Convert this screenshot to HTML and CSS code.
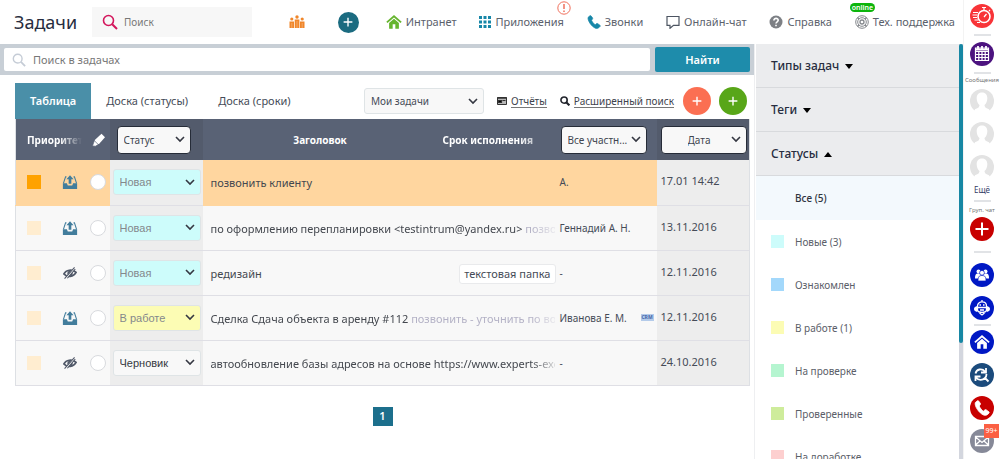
FILE: index.html
```html
<!DOCTYPE html>
<html lang="ru">
<head>
<meta charset="utf-8">
<title>Задачи</title>
<link rel="stylesheet" href="styles.css">
</head>
<body>
<svg class="defs" aria-hidden="true">
  <symbol id="lens" viewBox="0 0 16 16"><circle cx="6.5" cy="6.5" r="5" fill="none" stroke="currentColor" stroke-width="1.6"/><path d="M10.2 10.2 15 15" stroke="currentColor" stroke-width="2"/></symbol>
  <symbol id="plus" viewBox="0 0 16 16"><path d="M8 1v14M1 8h14" stroke="currentColor" stroke-width="2.2"/></symbol>
  <symbol id="phone" viewBox="0 0 16 16"><path fill="currentColor" d="M3.4.8 1.3 2.6C.2 6 5.200 13.300 9.500 15c2 .7 4 .3 5.700-2.300l-.2-.8-3-2.200-1 .1-1.600 1.400C8 10.500 6 8 5.200 6l1.200-1.600.1-.9L4.400.8z" stroke="currentColor" stroke-width=".8"/></symbol>
  <symbol id="house" viewBox="0 0 18 16"><path d="M1 8.500 9 1.500l8 7" fill="none" stroke="currentColor" stroke-width="2"/><path fill="currentColor" d="M3.500 9 9 4.300 14.500 9v6.500h-4V10.500h-3v5h-4z"/></symbol>
  <symbol id="tray" viewBox="0 0 18 16"><path fill="currentColor" d="M9 .3 13 5h-2.500v5h-3V5H5zM1 9.500h4.500l1 2.300h5l1-2.300H17V16H1z"/><path d="M5 2.200H4L1.600 9.500M13 2.200h1l2.400 7.300" fill="none" stroke="currentColor" stroke-width="1.200"/></symbol>
  <symbol id="hidden" viewBox="0 0 16 14"><path d="M1 8C3.500 3.500 10 2 15 6.200 12 11.500 5 12.500 1 8z" fill="none" stroke="currentColor" stroke-width="1.900"/><circle cx="8" cy="7.300" r="3" fill="currentColor"/><path d="M3 13.500 14 .5" stroke="#f8f8f8" stroke-width="2.200"/><path d="M1.800 13.500 13.200.5M5 13 14 2.500" stroke="currentColor" stroke-width="1.200"/></symbol>
  <symbol id="avatar" viewBox="0 0 24 24"><circle cx="12" cy="12" r="12" fill="#e3e3e3"/><path fill="#fff" d="M12 3.500c-4 0-5.500 2.800-5.300 6.200.1 3 1.300 5.200 2.800 6.300-.2 2-1 3-4.500 4.300L3 25h18l-2-4.700c-3.500-1.300-4.300-2.300-4.500-4.300 1.500-1.100 2.700-3.300 2.800-6.300.2-3.400-1.300-6.200-5.300-6.200z"/></symbol>
</svg>
<div class="app">
  <div class="workspace">
    <header class="topbar">
      <h1 class="topbar-title">Задачи</h1>
      <label class="quick-search">
        <svg class="icon-16"><use href="#lens"/></svg>
        <input type="search" placeholder="Поиск" aria-label="Поиск">
      </label>
      <nav class="topnav">
        <a href="#" class="rating" aria-label="Рейтинг"><svg class="icon-16" viewBox="0 0 16 16" fill="currentColor"><path d="M.5 7.500h4.500V14H.5zM5.700 5.500h4.700V14H5.700zM11 7.500h4.500V14H11z"/><circle cx="2.800" cy="5" r="1.600"/><circle cx="8" cy="3" r="1.700"/><circle cx="13.200" cy="5" r="1.600"/><path d="M2.800 9v5M8 7v7M13.200 9v5" stroke="#fff" stroke-width=".7" opacity=".4"/></svg></a>
        <button class="create" aria-label="Создать"><svg class="icon-10" viewBox="0 0 16 16"><use href="#plus"/></svg></button>
        <a href="#"><svg class="icon-16 green"><use href="#house"/></svg>Интранет</a>
        <a href="#" class="apps"><svg class="icon-12 teal" viewBox="0 0 12 12" fill="currentColor"><path d="M0 0h3v3H0zM4.500 0h3v3h-3zM9 0h3v3H9zM0 4.500h3v3H0zM4.500 4.500h3v3h-3zM9 4.500h3v3H9zM0 9h3v3H0zM4.500 9h3v3h-3zM9 9h3v3H9z"/></svg>Приложения<svg class="alert" viewBox="0 0 14 14"><circle cx="7" cy="7" r="6.200" fill="#fff" stroke="#f0705c"/><path d="M7 3v5M7 9.500V11" stroke="#f0705c" stroke-width="1.500"/></svg></a>
        <a href="#"><svg class="icon-14 teal"><use href="#phone"/></svg>Звонки</a>
        <a href="#"><svg class="icon-14" viewBox="0 0 14 14" fill="none" stroke="#4d5562" stroke-width="1.200"><path d="M1 1.500h12v8.800H7.500L4 13.300v-3H1z"/></svg>Онлайн-чат</a>
        <a href="#"><svg class="icon-14" viewBox="0 0 14 14"><circle cx="7" cy="7" r="6.500" fill="#7d8085"/><path d="M4.900 5.500c0-3 4.400-2.700 4.300-.2C9.200 6.800 7 6.800 7 8.600M7 9.700v1.600" fill="none" stroke="#fff" stroke-width="1.600"/></svg>Справка</a>
        <a href="#" class="support"><svg class="icon-14" viewBox="0 0 14 14" fill="none" stroke="#85888d"><circle cx="7" cy="7" r="6.300"/><circle cx="7" cy="7" r="4.300"/><circle cx="7" cy="7" r="2" stroke-width="1.300"/><path d="M2.500 2.500 4 4M11.500 2.500 10 4M2.500 11.500 4 10M11.500 11.500 10 10" stroke-width="1.300"/></svg>Тех. поддержка<span class="online">online</span></a>
      </nav>
    </header>
    <div class="columns">
      <main class="main">
        <form class="task-search">
          <label class="task-search-field">
            <svg class="icon-14"><use href="#lens"/></svg>
            <input type="search" placeholder="Поиск в задачах" aria-label="Поиск в задачах">
          </label>
          <button type="button">Найти</button>
        </form>
        <section class="content">
          <div class="toolbar">
            <div class="tabs">
              <button class="tab active">Таблица</button>
              <button class="tab">Доска (статусы)</button>
              <button class="tab">Доска (сроки)</button>
            </div>
            <select class="scope" aria-label="Набор задач"><option>Мои задачи</option></select>
            <a href="#" class="tool"><svg class="icon-10" viewBox="0 0 10 10"><path d="M.5 1.500h9v7h-9z" fill="#b8b8b8" stroke="#333"/><path d="M0 2.200h10M1.500 4.500h3v2h-3zM5.500 4.500h3" stroke="#333" stroke-width="1.200"/></svg><span>Отчёты</span></a>
            <a href="#" class="tool advanced"><svg class="icon-10" viewBox="0 0 16 16"><circle cx="6.500" cy="6.500" r="5" fill="none" stroke="currentColor" stroke-width="2.600"/><path d="m10 10 5 5" stroke="currentColor" stroke-width="3.300"/></svg><span>Расширенный поиск</span></a>
            <div class="adders">
              <button class="add coral" aria-label="Добавить"><svg class="icon-10" viewBox="0 0 16 16"><use href="#plus"/></svg></button>
              <button class="add lime" aria-label="Добавить задачу"><svg class="icon-10" viewBox="0 0 16 16"><use href="#plus"/></svg></button>
            </div>
          </div>
          <table class="tasks">
            <colgroup><col class="c-priority"><col class="c-icon"><col class="c-check"><col class="c-status"><col><col class="c-due"><col class="c-people"><col class="c-date"></colgroup>
            <thead>
              <tr>
                <th colspan="2" class="fade-head"><span>Приоритет</span></th>
                <th><svg class="icon-14 marker" viewBox="0 0 14 14"><path fill="#fff" d="M9.500.8 13 4.300 7 11l-4-.2L2.800 7z"/><path d="m2.300 7.600 4 4L3.500 13.200.5 13z" fill="#fff" stroke="#596275" stroke-width=".7"/></svg></th>
                <th class="shade"><select class="head-select narrow" aria-label="Статус"><option>Статус</option></select></th>
                <th class="center">Заголовок</th>
                <th class="fade-head due"><span>Срок исполнения</span></th>
                <th><select class="head-select" aria-label="Участники"><option>Все участн...</option></select></th>
                <th class="shade"><select class="head-select date-select" aria-label="Дата"><option>Дата</option></select></th>
              </tr>
            </thead>
            <tbody>
              <tr class="urgent">
                <td class="prio"><i class="square"></i></td>
                <td><svg class="icon-16 sent"><use href="#tray"/></svg></td>
                <td><input type="checkbox" aria-label="Выбрать"></td>
                <td class="shade"><select class="status new" aria-label="Статус задачи"><option>Новая</option></select></td>
                <td colspan="2" class="title"><div>позвонить клиенту</div></td>
                <td class="people">А.</td>
                <td class="shade date">17.01 14:42</td>
              </tr>
              <tr>
                <td class="prio"><i class="square"></i></td>
                <td><svg class="icon-16 sent"><use href="#tray"/></svg></td>
                <td><input type="checkbox" aria-label="Выбрать"></td>
                <td class="shade"><select class="status new" aria-label="Статус задачи"><option>Новая</option></select></td>
                <td colspan="2" class="title faded"><div>по оформлению перепланировки &lt;testintrum@yandex.ru&gt; <span class="note">позвони</span></div></td>
                <td class="people">Геннадий А. Н.</td>
                <td class="shade date">13.11.2016</td>
              </tr>
              <tr>
                <td class="prio"><i class="square"></i></td>
                <td><svg class="icon-14 hid"><use href="#hidden"/></svg></td>
                <td><input type="checkbox" aria-label="Выбрать"></td>
                <td class="shade"><select class="status new" aria-label="Статус задачи"><option>Новая</option></select></td>
                <td colspan="2" class="title"><div class="with-tag">редизайн <span class="tag">текстовая папка</span></div></td>
                <td class="people">-</td>
                <td class="shade date">12.11.2016</td>
              </tr>
              <tr>
                <td class="prio"><i class="square"></i></td>
                <td><svg class="icon-16 sent"><use href="#tray"/></svg></td>
                <td><input type="checkbox" aria-label="Выбрать"></td>
                <td class="shade"><select class="status work" aria-label="Статус задачи"><option>В работе</option></select></td>
                <td colspan="2" class="title faded"><div>Сделка Сдача объекта в аренду #112 <span class="note">позвонить - уточнить по вопр</span></div></td>
                <td class="people"><div class="person">Иванова Е. М.<span class="crm">CRM</span></div></td>
                <td class="shade date">12.11.2016</td>
              </tr>
              <tr>
                <td class="prio"><i class="square"></i></td>
                <td><svg class="icon-14 hid"><use href="#hidden"/></svg></td>
                <td><input type="checkbox" aria-label="Выбрать"></td>
                <td class="shade"><select class="status draft" aria-label="Статус задачи"><option>Черновик</option></select></td>
                <td colspan="2" class="title faded"><div>автообновление базы адресов на основе https://www.experts-excha</div></td>
                <td class="people">-</td>
                <td class="shade date">24.10.2016</td>
              </tr>
            </tbody>
          </table>
          <nav class="pager"><button>1</button></nav>
        </section>
      </main>
      <aside class="filters">
        <div class="filters-body">
          <button class="group">Типы задач <i class="caret"></i></button>
          <button class="group">Теги <i class="caret"></i></button>
          <button class="group">Статусы <i class="caret up"></i></button>
          <ul>
            <li><a href="#" class="all"><i></i>Все (5)</a></li>
            <li><a href="#"><i class="s-new"></i>Новые (3)</a></li>
            <li><a href="#"><i class="s-seen"></i>Ознакомлен</a></li>
            <li><a href="#"><i class="s-work"></i>В работе (1)</a></li>
            <li><a href="#"><i class="s-review"></i>На проверке</a></li>
            <li><a href="#"><i class="s-checked"></i>Проверенные</a></li>
            <li><a href="#"><i class="s-rework"></i>На доработке</a></li>
          </ul>
        </div>
        <div class="scroll"><div class="thumb"></div></div>
      </aside>
    </div>
  </div>
  <aside class="rail">
    <button class="disc timer" aria-label="Таймер"><svg viewBox="0 0 24 24" fill="none" stroke="#fff"><circle cx="14" cy="12.500" r="6" stroke-width="1.600"/><path d="M14 6V4M12 3.500h4M14 13l2.500-3M19 7l1-1M3 8.500h5M2.500 11h4.500M3 13.500h4M4.500 16h4M7 18.500h3" stroke-width="1.200"/></svg></button>
    <hr>
    <button class="disc calendar" aria-label="Календарь"><svg viewBox="0 0 24 24" fill="none" stroke="#fff"><path d="M5.500 6h13v12.500h-13zM5.500 9.500h13M5.500 12.500h13M5.500 15.500h13M8.800 9.500v9M12 9.500v9M15.200 9.500v9" stroke-width="1.200"/><path d="M5 7.500h14M8 4v3M12 4v3M16 4v3" stroke-width="1.800"/></svg></button>
    <hr>
    <span class="caption">Сообщения</span>
    <div class="stack">
      <button class="disc" aria-label="Контакт 1"><svg viewBox="0 0 24 24"><use href="#avatar"/></svg></button>
      <button class="disc" aria-label="Контакт 2"><svg viewBox="0 0 24 24"><use href="#avatar"/></svg></button>
      <button class="disc" aria-label="Контакт 3"><svg viewBox="0 0 24 24"><use href="#avatar"/></svg></button>
    </div>
    <a href="#" class="more">Ещё</a>
    <hr class="tight">
    <span class="caption">Груп. чат</span>
    <button class="disc red" aria-label="Новый чат"><svg viewBox="0 0 24 24"><path d="M12 5.500v13M5.500 12h13" stroke="#fff" stroke-width="2"/></svg></button>
    <hr class="wide">
    <div class="stack">
      <button class="disc blue" aria-label="Сотрудники"><svg viewBox="0 0 24 24" fill="#fff"><circle cx="8.500" cy="8.500" r="2"/><circle cx="15.500" cy="8.500" r="2"/><path d="M5 15.500c0-4 1-5 3-5h8c2 0 3 1 3 5z"/><g stroke="#0018c4" stroke-width=".7"><circle cx="12" cy="9.800" r="2.400"/><path d="M8 18c0-4 1-5.500 4-5.500s4 1.500 4 5.500z"/></g></svg></button>
      <button class="disc blue" aria-label="Бот"><svg viewBox="0 0 24 24" fill="none" stroke="#fff" stroke-width="1.300"><path d="M7.500 10c0-5.500 9-5.500 9 0v4.500c-1 2.500-8 2.500-9 0zM7.500 11.500h9M9.500 17 12 19l2.500-2M12 4v2"/><path d="M6.500 11c-2.500.5-2.500 3.500 0 4zM17.500 11c2.500.5 2.500 3.500 0 4z" fill="#fff"/><path d="M9.500 9h1.500M13 9h1.500M10 14h4" stroke-width="1.600"/></svg></button>
    </div>
    <hr class="tight">
    <div class="stack">
      <button class="disc blue" aria-label="Главная"><svg class="inner" viewBox="0 0 18 16"><use href="#house"/></svg></button>
      <button class="disc navy" aria-label="Поиск и замена"><svg viewBox="0 0 24 24" fill="none" stroke="#fff" stroke-width="1.800"><path d="M5.500 10.500C6.500 6 12 5 15 8.500M16 5v4.500h-5M5.500 18v-4.500h5M6 14.500c2.500 3 6.500 3 9 .5 1.500-1.500 1.500-3 1.500-4M14.500 14.500l4 4"/></svg></button>
      <button class="disc red" aria-label="Телефон"><svg class="inner" viewBox="0 0 16 16"><use href="#phone"/></svg></button>
      <button class="disc mail" aria-label="Почта"><svg viewBox="0 0 24 24" fill="none" stroke="#fff" stroke-width="1.300"><path d="M5.500 7.500h13v9h-13zM5.500 8l6.500 5.500L18.500 8M5.500 16l4.500-4M18.500 16 14 12"/></svg><span class="count">99+</span></button>
    </div>
  </aside>
</div>
</body>
</html>
```

FILE: styles.css
```css
* { box-sizing: border-box; }
body {
  margin: 0;
  font: 11px/16px "Noto Sans", "Open Sans", sans-serif;
  color: #454b57;
  background: #fff;
}
button, input, select { font: inherit; color: inherit; margin: 0; border: 0; }
button { padding: 0; cursor: pointer; }
a { color: inherit; text-decoration: none; }
svg { display: block; flex: none; }
.defs { position: absolute; width: 0; height: 0; }
.icon-10 { width: 10px; height: 10px; }
.icon-12 { width: 12px; height: 12px; }
.icon-14 { width: 14px; height: 14px; }
.icon-16 { width: 16px; height: 16px; }
.green { color: #66b52e; }
.teal { color: #1787a8; }

.app { display: flex; height: 100vh; overflow: hidden; }
.workspace { flex: 1; min-width: 0; display: flex; flex-direction: column; }

/* Top bar */
.topbar { display: flex; align-items: center; flex: none; height: 44px; padding: 0 8px 0 14px; }
.topbar-title { margin: 0; width: 78px; font-size: 18px; line-height: 24px; font-weight: 400; color: #272d40; }
.quick-search { display: flex; align-items: center; gap: 6px; width: 160px; height: 30px; padding: 0 10px; background: #f7f7f7; color: #d3165c; }
.quick-search input { width: 100%; padding: 0; background: none; font-size: 10px; outline: 0; }
input::placeholder { color: #777; opacity: 1; }
.topnav { flex: 1; display: flex; align-items: center; justify-content: space-between; margin-left: 37px; color: #5b616c; }
.topnav a { position: relative; display: flex; align-items: center; gap: 4px; white-space: nowrap; }
.topnav .rating { margin-right: 10px; color: #f0862a; }
.create { display: grid; place-items: center; width: 21px; height: 21px; margin-right: 4px; border-radius: 50%; background: #1b6b80; color: #fff; }
.alert { position: absolute; width: 14px; height: 14px; right: -7px; top: -13px; }
.online { position: absolute; left: -5px; top: -11px; padding: 0 2px; border-radius: 5px; background: #0cb50c; color: #fff; font-size: 7px; line-height: 9px; font-weight: 600; }

/* Columns under the top bar */
.columns { flex: 1; display: flex; min-height: 0; }
.main { flex: 1; min-width: 0; border-right: 1px solid #eeeff1; }
.task-search { display: flex; gap: 5px; padding: 3px 4px; background: #c8cfd6; }
.task-search-field { flex: 1; display: flex; align-items: center; gap: 7px; height: 23px; margin: 1px 0; padding: 0 8px; background: #fff; border-radius: 2px; color: #c5ccd6; }
.task-search-field input { flex: 1; padding: 0; background: none; outline: 0; }
.task-search button { width: 95px; border-radius: 2px; background: #1e8cab; color: #fff; font-weight: 600; }

.content { padding: 8px 4px 0 15px; }
.toolbar { display: flex; align-items: center; padding-right: 3px; }
.tabs { display: flex; margin-right: auto; }
.tab { height: 36px; padding: 0 15px; background: none; white-space: nowrap; }
.tab.active { background: #4a8fa8; color: #fff; font-weight: 600; }
select {
  appearance: none;
  background: #f8f8f8 url("data:image/svg+xml,%3Csvg xmlns='http://www.w3.org/2000/svg' width='10' height='7'%3E%3Cpath d='M1 1l4 4 4-4' fill='none' stroke='%23353842' stroke-width='1.6'/%3E%3C/svg%3E") no-repeat right 5px center;
}
.scope { width: 120px; height: 26px; padding: 0 6px; border: 1px solid #dfe4e6; border-radius: 3px; font-size: 10px; }
.tool { display: flex; align-items: center; gap: 4px; margin-left: 13px; font-size: 10px; white-space: nowrap; color: #22252d; }
.tool span { border-bottom: 1px solid #777; line-height: 12px; color: #3e434d; }
.adders { display: flex; gap: 8px; margin-left: 9px; }
.add { display: grid; place-items: center; width: 28px; height: 28px; border-radius: 50%; color: #fff; }
.coral { background: #fb6f52; }
.lime { background: #58a618; }

/* Task table */
.tasks { width: 100%; table-layout: fixed; border-collapse: collapse; border: 1px solid #dde0e4; border-top: 0; }
.c-priority { width: 38px; }
.c-icon { width: 30px; }
.c-check { width: 26px; }
.c-status { width: 93px; }
.c-due { width: 120px; }
.c-people { width: 99px; }
.c-date { width: 93px; }
th { height: 41px; padding: 0; background: #596275; color: #fff; font-size: 10px; font-weight: 700; text-align: left; }
th.shade { background: #535b6c; }
.center { text-align: center; }
.fade-head { white-space: nowrap; overflow: hidden; padding-left: 11px; }
.fade-head span { display: block; overflow: hidden; margin-right: 2px; mask-image: linear-gradient(90deg, #000 60%, transparent); }
.due { padding-left: 5px; }
.due span { margin-right: 20px; mask-image: linear-gradient(90deg, #000 80%, #0008); }
.marker { margin-left: 8px; }
.head-select { display: block; width: 86px; height: 28px; margin-left: 3px; padding: 0 6px; border: 1px solid #262c38; border-radius: 4px; color: #40454f; font-weight: 400; }
.head-select.narrow { width: 74px; margin-left: 7px; }
.date-select { margin-left: 4px; padding-left: 26px; }
.tasks td { height: 45px; padding: 0; background: #f8f8f8; border-bottom: 1px solid #dfdfe5; }
.tasks td.shade { background: #ededed; }
.tasks .urgent td:not(.shade) { background: #ffd69f; border-bottom-color: #ffd69f; }
.tasks .prio { padding-left: 11px; }
.square { display: block; width: 14px; height: 14px; background: #ffedd0; }
.urgent .square { background: #ffa200; }
.sent { margin-left: 8px; color: #427d9c; }
.hid { margin-left: 9px; color: #505868; }
.tasks input { display: block; appearance: none; width: 16px; height: 16px; margin-left: 6px; border: 1px solid #d8dade; border-radius: 50%; background: #fff; }
.status { display: block; width: 88px; height: 26px; margin-left: 3px; padding: 0 6px; border: 1px solid #dfe4e6; border-radius: 3px; font-family: "Liberation Sans", sans-serif; }
.new { background-color: #cdfcfb; color: #84888c; }
.work { background-color: #fcfcb4; color: #84888c; }
.draft { color: #35393f; }
.title div { padding: 2px 0 0 8px; overflow: hidden; white-space: nowrap; color: #44484f; }
.faded div { margin-right: 3px; mask-image: linear-gradient(90deg, #000 93%, #0003); }
.note { color: #b4b2c6; }
.title .with-tag { display: flex; align-items: center; justify-content: space-between; }
.tag { padding: 1px 4px; margin-right: 2px; border: 1px solid #e9eaec; border-radius: 3px; background: #fff; color: #454b57; }
.tasks .people { padding-left: 2px; font-size: 10px; white-space: nowrap; }
.tasks .date { padding: 0 0 2px 4px; }
.person { display: flex; align-items: center; justify-content: space-between; padding-right: 3px; }
.crm { width: 13px; background: #b4cbea; color: #4669ac; font-size: 5px; line-height: 7px; font-weight: 700; text-align: center; }
.pager { display: flex; justify-content: center; margin-top: 21px; }
.pager button { width: 20px; height: 19px; background: #1c6f8c; color: #fff; font-weight: 600; }

/* Filters */
.filters { display: flex; width: 208px; flex: none; overflow: hidden; }
.filters-body { flex: 1; margin-left: 1px; }
.group { display: flex; align-items: center; gap: 6px; width: 100%; height: 44px; padding-left: 15px; background: #ebecee; border-bottom: 1px solid #d8dadd; font-size: 12px; color: #272d40; font-weight: 500; }
.caret { margin-top: 2px; border: 4px solid transparent; border-top: 5px solid #000; border-bottom: 0; }
.caret.up { border-top: 0; border-bottom: 5px solid #000; }
.filters ul { margin: 0; padding: 0; list-style: none; }
.filters li a { display: flex; align-items: center; gap: 11px; height: 43px; padding-left: 15px; font-size: 10px; color: #5b6069; }
.filters li .all { height: 44px; background: #f3f9fd; color: #2f343d; font-weight: 500; }
.filters li i { width: 13px; height: 13px; }
.s-new { background: #cdfcfb; }
.s-seen { background: #a3d8fb; }
.s-work { background: #fcfcb4; }
.s-review { background: #b5f5d0; }
.s-checked { background: #ceec9b; }
.s-rework { background: #fdcfcf; }
.scroll { width: 4px; background: #d3d6de; }
.thumb { height: 72%; background: #1787a4; border-radius: 2px; }

/* Right rail */
.rail { display: flex; flex-direction: column; align-items: center; width: 37px; flex: none; padding-top: 4px; border-left: 1px solid #f3f3f3; }
.rail hr { flex: none; width: 17px; height: 2px; margin: 6px 0; border: 0; background: #e1e3e6; }
.rail hr.tight { margin: 4px 0; }
.rail hr.wide { margin: 10px 0; }
.disc { position: relative; flex: none; display: grid; place-items: center; width: 24px; height: 24px; border-radius: 50%; background: none; color: #fff; }
.disc svg { width: 24px; height: 24px; }
.disc .inner { width: 16px; height: 16px; }
.timer { background: #f83438; }
.calendar { background: #4c137f; }
.red { background: #c80000; }
.blue { background: #0018c4; }
.navy { background: #1b4b7c; }
.mail { background: #868998; }
.stack { display: flex; flex-direction: column; gap: 9px; }
.caption { margin-bottom: 5px; font-size: 6px; line-height: 8px; color: #777; white-space: nowrap; }
.rail hr + .caption { margin-top: -4px; }
.more { margin-top: 5px; font-size: 8px; line-height: 12px; color: #343b66; }
.rail .more + hr + .caption { margin-top: 0; margin-bottom: 3px; }
.count { position: absolute; left: 14px; top: -5px; width: 15px; background: #fb6043; color: #fff; font-size: 7px; line-height: 14px; text-align: center; }
```
